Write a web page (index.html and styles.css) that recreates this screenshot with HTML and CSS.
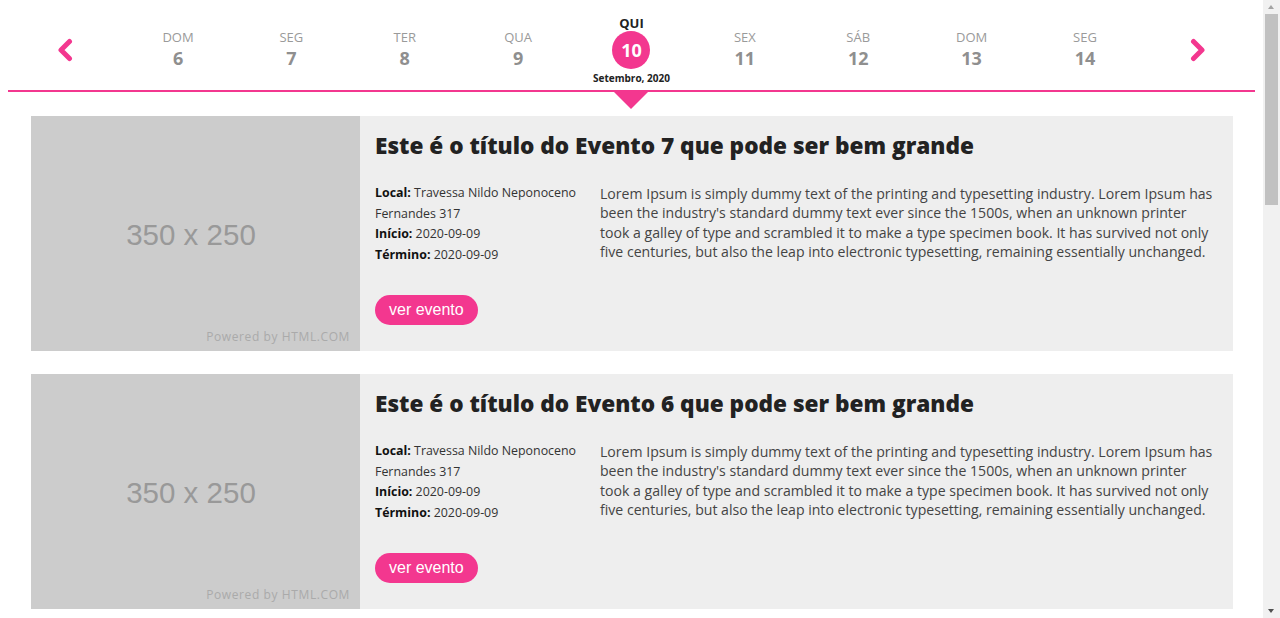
FILE: index.html
```html
<!DOCTYPE html>
<html lang="pt-BR">
<head>
<meta charset="utf-8">
<title>Agenda de Eventos</title>
<link rel="stylesheet" href="styles.css">
</head>
<body>
<header class="datebar">
  <button class="nav-arrow" aria-label="Anterior">
    <svg width="16" height="24" viewBox="0 0 16 24"><polyline points="12.5,3.5 4,12 12.5,20.5" fill="none" stroke="#f3378f" stroke-width="5" stroke-linecap="round" stroke-linejoin="round"/></svg>
  </button>
  <div class="day"><span class="dname">DOM</span><span class="dnum">6</span></div>
  <div class="day"><span class="dname">SEG</span><span class="dnum">7</span></div>
  <div class="day"><span class="dname">TER</span><span class="dnum">8</span></div>
  <div class="day"><span class="dname">QUA</span><span class="dnum">9</span></div>
  <div class="day day-active">
    <span class="dname">QUI</span>
    <span class="dnum">10</span>
    <span class="dmonth">Setembro, 2020</span>
    <span class="pointer"></span>
  </div>
  <div class="day"><span class="dname">SEX</span><span class="dnum">11</span></div>
  <div class="day"><span class="dname">SÁB</span><span class="dnum">12</span></div>
  <div class="day"><span class="dname">DOM</span><span class="dnum">13</span></div>
  <div class="day"><span class="dname">SEG</span><span class="dnum">14</span></div>
  <button class="nav-arrow" aria-label="Próximo">
    <svg width="16" height="24" viewBox="0 0 16 24"><polyline points="3.5,3.5 12,12 3.5,20.5" fill="none" stroke="#f3378f" stroke-width="5" stroke-linecap="round" stroke-linejoin="round"/></svg>
  </button>
</header>

<main class="events">
  <article class="event">
    <div class="thumb"><span class="thumb-size">350 x 250</span><span class="thumb-credit">Powered by HTML.COM</span></div>
    <div class="event-body">
      <h2 class="event-title">Este é o título do Evento 7 que pode ser bem grande</h2>
      <div class="event-row">
        <div class="event-info">
          <div><b>Local:</b> Travessa Nildo Neponoceno Fernandes 317</div>
          <div><b>Início:</b> 2020-09-09</div>
          <div><b>Término:</b> 2020-09-09</div>
        </div>
        <p class="event-desc">Lorem Ipsum is simply dummy text of the printing and typesetting industry. Lorem Ipsum has been the industry's standard dummy text ever since the 1500s, when an unknown printer took a galley of type and scrambled it to make a type specimen book. It has survived not only five centuries, but also the leap into electronic typesetting, remaining essentially unchanged.</p>
      </div>
      <a class="event-btn" href="#">ver evento</a>
    </div>
  </article>

  <article class="event">
    <div class="thumb"><span class="thumb-size">350 x 250</span><span class="thumb-credit">Powered by HTML.COM</span></div>
    <div class="event-body">
      <h2 class="event-title">Este é o título do Evento 6 que pode ser bem grande</h2>
      <div class="event-row">
        <div class="event-info">
          <div><b>Local:</b> Travessa Nildo Neponoceno Fernandes 317</div>
          <div><b>Início:</b> 2020-09-09</div>
          <div><b>Término:</b> 2020-09-09</div>
        </div>
        <p class="event-desc">Lorem Ipsum is simply dummy text of the printing and typesetting industry. Lorem Ipsum has been the industry's standard dummy text ever since the 1500s, when an unknown printer took a galley of type and scrambled it to make a type specimen book. It has survived not only five centuries, but also the leap into electronic typesetting, remaining essentially unchanged.</p>
      </div>
      <a class="event-btn" href="#">ver evento</a>
    </div>
  </article>

  <article class="event">
    <div class="thumb"><span class="thumb-size">350 x 250</span><span class="thumb-credit">Powered by HTML.COM</span></div>
    <div class="event-body">
      <h2 class="event-title">Este é o título do Evento 5 que pode ser bem grande</h2>
      <div class="event-row">
        <div class="event-info">
          <div><b>Local:</b> Travessa Nildo Neponoceno Fernandes 317</div>
          <div><b>Início:</b> 2020-09-09</div>
          <div><b>Término:</b> 2020-09-09</div>
        </div>
        <p class="event-desc">Lorem Ipsum is simply dummy text of the printing and typesetting industry. Lorem Ipsum has been the industry's standard dummy text ever since the 1500s, when an unknown printer took a galley of type and scrambled it to make a type specimen book. It has survived not only five centuries, but also the leap into electronic typesetting, remaining essentially unchanged.</p>
      </div>
      <a class="event-btn" href="#">ver evento</a>
    </div>
  </article>

  <article class="event">
    <div class="thumb"><span class="thumb-size">350 x 250</span><span class="thumb-credit">Powered by HTML.COM</span></div>
    <div class="event-body">
      <h2 class="event-title">Este é o título do Evento 4 que pode ser bem grande</h2>
      <div class="event-row">
        <div class="event-info">
          <div><b>Local:</b> Travessa Nildo Neponoceno Fernandes 317</div>
          <div><b>Início:</b> 2020-09-09</div>
          <div><b>Término:</b> 2020-09-09</div>
        </div>
        <p class="event-desc">Lorem Ipsum is simply dummy text of the printing and typesetting industry. Lorem Ipsum has been the industry's standard dummy text ever since the 1500s, when an unknown printer took a galley of type and scrambled it to make a type specimen book. It has survived not only five centuries, but also the leap into electronic typesetting, remaining essentially unchanged.</p>
      </div>
      <a class="event-btn" href="#">ver evento</a>
    </div>
  </article>

  <article class="event">
    <div class="thumb"><span class="thumb-size">350 x 250</span><span class="thumb-credit">Powered by HTML.COM</span></div>
    <div class="event-body">
      <h2 class="event-title">Este é o título do Evento 3 que pode ser bem grande</h2>
      <div class="event-row">
        <div class="event-info">
          <div><b>Local:</b> Travessa Nildo Neponoceno Fernandes 317</div>
          <div><b>Início:</b> 2020-09-09</div>
          <div><b>Término:</b> 2020-09-09</div>
        </div>
        <p class="event-desc">Lorem Ipsum is simply dummy text of the printing and typesetting industry. Lorem Ipsum has been the industry's standard dummy text ever since the 1500s, when an unknown printer took a galley of type and scrambled it to make a type specimen book. It has survived not only five centuries, but also the leap into electronic typesetting, remaining essentially unchanged.</p>
      </div>
      <a class="event-btn" href="#">ver evento</a>
    </div>
  </article>

  <article class="event">
    <div class="thumb"><span class="thumb-size">350 x 250</span><span class="thumb-credit">Powered by HTML.COM</span></div>
    <div class="event-body">
      <h2 class="event-title">Este é o título do Evento 2 que pode ser bem grande</h2>
      <div class="event-row">
        <div class="event-info">
          <div><b>Local:</b> Travessa Nildo Neponoceno Fernandes 317</div>
          <div><b>Início:</b> 2020-09-09</div>
          <div><b>Término:</b> 2020-09-09</div>
        </div>
        <p class="event-desc">Lorem Ipsum is simply dummy text of the printing and typesetting industry. Lorem Ipsum has been the industry's standard dummy text ever since the 1500s, when an unknown printer took a galley of type and scrambled it to make a type specimen book. It has survived not only five centuries, but also the leap into electronic typesetting, remaining essentially unchanged.</p>
      </div>
      <a class="event-btn" href="#">ver evento</a>
    </div>
  </article>

  <article class="event">
    <div class="thumb"><span class="thumb-size">350 x 250</span><span class="thumb-credit">Powered by HTML.COM</span></div>
    <div class="event-body">
      <h2 class="event-title">Este é o título do Evento 1 que pode ser bem grande</h2>
      <div class="event-row">
        <div class="event-info">
          <div><b>Local:</b> Travessa Nildo Neponoceno Fernandes 317</div>
          <div><b>Início:</b> 2020-09-09</div>
          <div><b>Término:</b> 2020-09-09</div>
        </div>
        <p class="event-desc">Lorem Ipsum is simply dummy text of the printing and typesetting industry. Lorem Ipsum has been the industry's standard dummy text ever since the 1500s, when an unknown printer took a galley of type and scrambled it to make a type specimen book. It has survived not only five centuries, but also the leap into electronic typesetting, remaining essentially unchanged.</p>
      </div>
      <a class="event-btn" href="#">ver evento</a>
    </div>
  </article>
</main>

<div class="fake-scrollbar" aria-hidden="true">
  <span class="sb-arrow sb-up"></span>
  <span class="sb-thumb"></span>
  <span class="sb-arrow sb-down"></span>
</div>
</body>
</html>
```
FILE: styles.css
```css
html, body {
  background: #ffffff;
}
body {
  margin: 8px 25px 8px 8px;
  font-family: "Open Sans", "Liberation Sans", sans-serif;
  color: #222;
}

/* ---------- date bar ---------- */
.datebar {
  display: grid;
  grid-template-columns: repeat(11, 1fr);
  align-items: center;
  height: 82px;
  border-bottom: 2px solid #f3378f;
}
.nav-arrow {
  justify-self: center;
  display: flex;
  align-items: center;
  justify-content: center;
  background: none;
  border: 0;
  padding: 0;
  margin-top: 2px;
  cursor: pointer;
}
.day {
  display: flex;
  flex-direction: column;
  align-items: center;
}
.dname {
  font-size: 13px;
  line-height: 18px;
  color: #9a9a9a;
}
.dnum {
  font-size: 18px;
  line-height: 24px;
  font-weight: 700;
  color: #8f8f8f;
}
.day-active {
  position: relative;
  padding-top: 2px;
  align-self: stretch;
  justify-content: center;
}
.day-active .dname {
  font-weight: 700;
  color: #222;
  line-height: 16px;
}
.day-active .dnum {
  width: 38px;
  height: 38px;
  line-height: 38px;
  border-radius: 50%;
  background: #f3378f;
  color: #fff;
  text-align: center;
}
.dmonth {
  margin-top: 2px;
  font-size: 10px;
  line-height: 14px;
  font-weight: 700;
  color: #222;
  white-space: nowrap;
}
.pointer {
  position: absolute;
  left: 50%;
  bottom: -19px;
  margin-left: -17px;
  width: 0;
  height: 0;
  border-left: 17px solid transparent;
  border-right: 17px solid transparent;
  border-top: 17px solid #f3378f;
}

/* ---------- events ---------- */
.events {
  display: flex;
  flex-direction: column;
  gap: 23px;
  padding: 24px 22px 0 23px;
}
.event {
  display: flex;
  height: 235px;
  background: #eeeeee;
}
.thumb {
  flex: 0 0 329px;
  display: flex;
  flex-direction: column;
  background: #cccccc;
}
.thumb-size {
  flex: 1;
  display: flex;
  align-items: center;
  justify-content: center;
  padding: 25px 9px 0 0;
  font-family: "Liberation Sans", Arial, sans-serif;
  font-size: 29.5px;
  color: #999999;
}
.thumb-credit {
  align-self: flex-end;
  padding: 0 10px 6px 0;
  font-family: "Open Sans", sans-serif;
  font-size: 12px;
  letter-spacing: 0.6px;
  line-height: 16px;
  color: #aaaaaa;
}
.event-body {
  flex: 1;
  display: flex;
  flex-direction: column;
  align-items: flex-start;
  padding: 15px 15px 0 15px;
}
.event-title {
  margin: 0;
  font-size: 22.6px;
  line-height: 30px;
  font-weight: 800;
  color: #222;
}
.event-row {
  display: flex;
  gap: 15px;
  margin-top: 22px;
  width: 100%;
}
.event-info {
  flex: 0 0 210px;
  font-size: 12.4px;
  line-height: 20.5px;
  color: #333;
}
.event-info b {
  color: #111;
}
.event-desc {
  flex: 1;
  margin: 1px 0 0 0;
  font-size: 14.1px;
  line-height: 19.3px;
  color: #444;
}
.event-btn {
  margin-top: 30px;
  height: 30px;
  line-height: 30px;
  padding: 0 14px;
  border-radius: 15px;
  background: #f3378f;
  color: #fff;
  font-family: "Liberation Sans", Arial, sans-serif;
  font-size: 16px;
  text-decoration: none;
}

/* ---------- simulated browser scrollbar ---------- */
.fake-scrollbar {
  position: fixed;
  top: 0;
  right: 0;
  bottom: 0;
  width: 17px;
  background: #f1f1f1;
}
.sb-thumb {
  position: absolute;
  top: 14px;
  left: 2px;
  width: 13px;
  height: 191px;
  background: #c1c1c1;
}
.sb-arrow {
  position: absolute;
  left: 5px;
  width: 0;
  height: 0;
  border-left: 3.5px solid transparent;
  border-right: 3.5px solid transparent;
}
.sb-up {
  top: 5px;
  border-bottom: 4px solid #a3a3a3;
}
.sb-down {
  bottom: 5px;
  border-top: 4px solid #505050;
}
```
